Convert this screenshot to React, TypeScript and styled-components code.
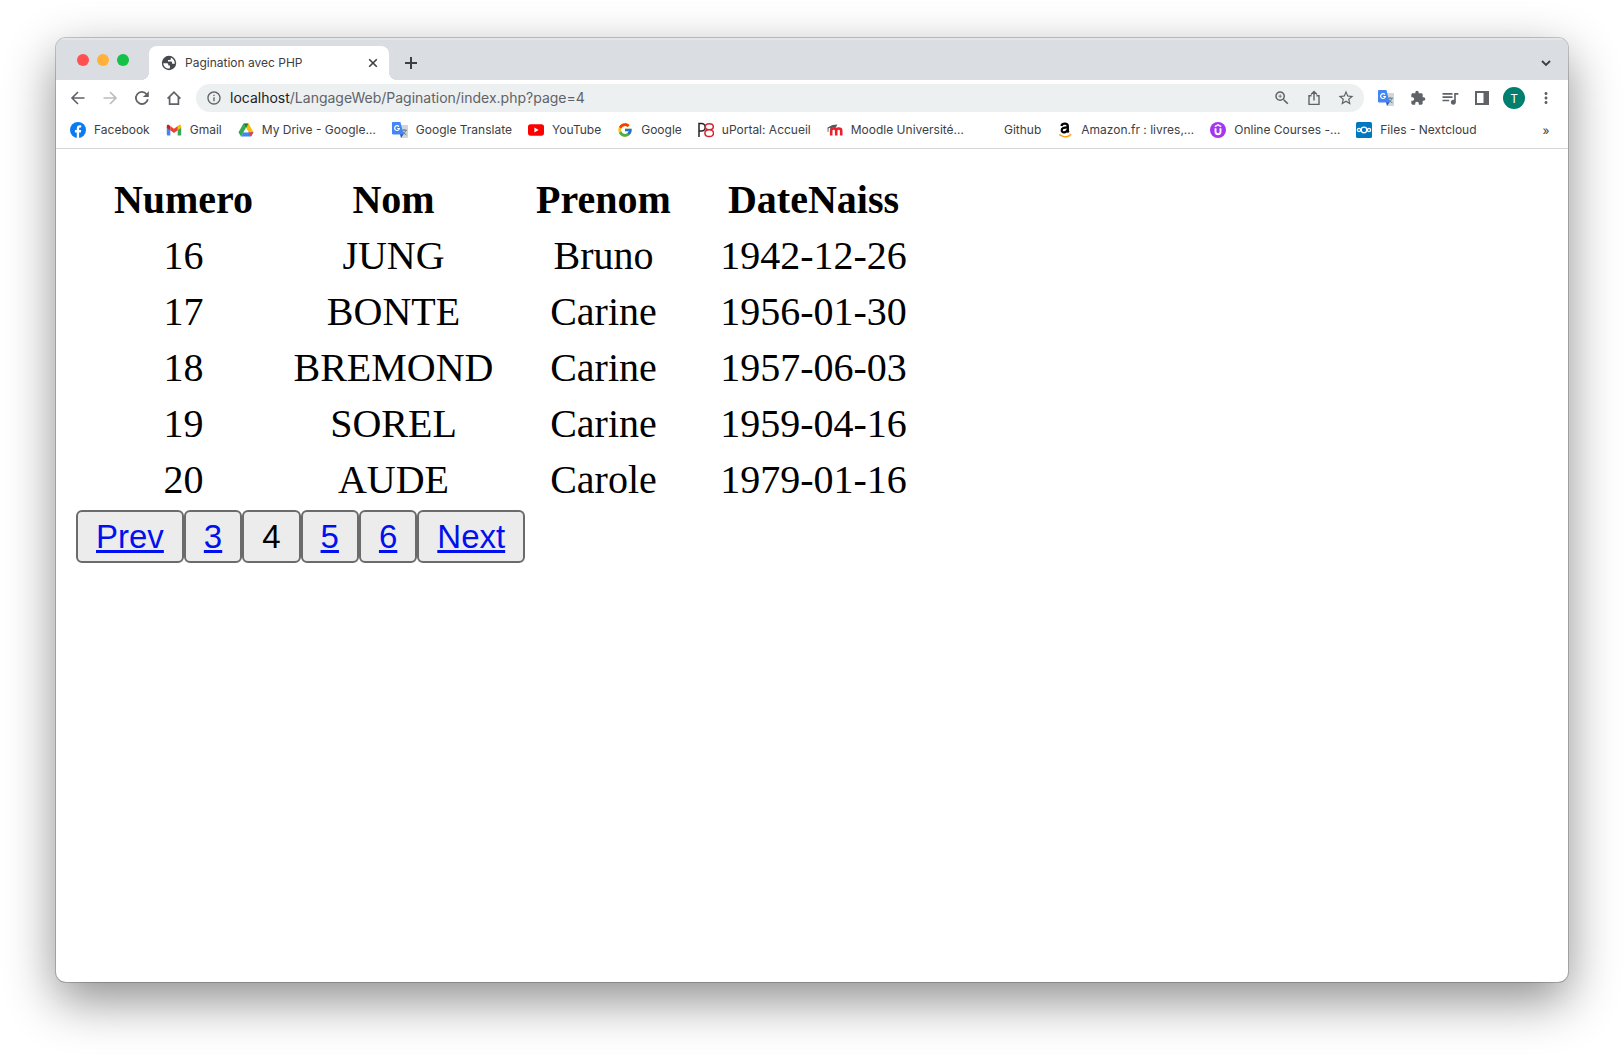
import React from "react";
import styled, { createGlobalStyle } from "styled-components";
import { FcGoogle } from "react-icons/fc";
import {
  MdExtension,
  MdInfoOutline,
  MdMoreVert,
  MdOutlineZoomIn,
  MdQueueMusic,
  MdStarBorder,
} from "react-icons/md";

const uiFont = `Inter, "Noto Sans", sans-serif`;

const GlobalStyle = createGlobalStyle`
  *, *::before, *::after { box-sizing: border-box; }
  body { margin: 0; background: #fff; }
`;

const Desktop = styled.div`
  display: flex;
  min-height: 100vh;
  padding: 38px 56px 74px;
`;

const Window = styled.div`
  flex: 1;
  min-width: 0;
  display: flex;
  flex-direction: column;
  overflow: hidden;
  border-radius: 10px;
  background: #fff;
  box-shadow: 0 0 0 1px rgba(0, 0, 0, 0.2), 0 18px 50px rgba(0, 0, 0, 0.45);
`;

const TabStrip = styled.div`
  display: flex;
  align-items: flex-end;
  height: 42px;
  padding: 0 6px 0 21px;
  background: #dadde2;
  box-shadow: inset 0 2px 0 #e3e5e9;
  font-family: ${uiFont};
`;

const WindowControls = styled.div`
  display: flex;
  gap: 8px;
  padding-bottom: 14px;
  margin-right: 20px;
`;

const Light = styled.button<{ $color: string }>`
  width: 12px;
  height: 12px;
  padding: 0;
  border: 0;
  border-radius: 50%;
  background: ${(p) => p.$color};
`;

const Tab = styled.div`
  position: relative;
  display: flex;
  align-items: center;
  width: 240px;
  height: 34px;
  padding: 0 8px 0 12px;
  border-radius: 8px 8px 0 0;
  background: #fff;
  color: #3c4043;
  &::before,
  &::after {
    content: "";
    position: absolute;
    bottom: 0;
    width: 8px;
    height: 8px;
  }
  &::before {
    right: 100%;
    background: radial-gradient(circle at 0 0, transparent 8px, #fff 8px);
  }
  &::after {
    left: 100%;
    background: radial-gradient(circle at 100% 0, transparent 8px, #fff 8px);
  }
`;

const TabTitle = styled.span`
  flex: 1;
  margin-left: 8px;
  font-size: 12px;
  line-height: 16px;
  white-space: nowrap;
`;

const IconButton = styled.button<{ $size?: number; $color?: string }>`
  display: flex;
  flex: none;
  align-items: center;
  justify-content: center;
  width: ${(p) => p.$size ?? 32}px;
  height: ${(p) => p.$size ?? 32}px;
  padding: 0;
  border: 0;
  background: transparent;
  color: ${(p) => p.$color ?? "#5f6368"};
`;

const StripButtons = styled.div`
  flex: 1;
  display: flex;
  justify-content: space-between;
  height: 34px;
  align-items: center;
  padding-left: 6px;
`;

const Toolbar = styled.div`
  display: flex;
  align-items: center;
  height: 36px;
  padding: 0 6px;
  font-family: ${uiFont};
`;

const AddressBar = styled.label`
  flex: 1;
  min-width: 0;
  display: flex;
  align-items: center;
  height: 28px;
  margin: 0 6px;
  padding: 0 2px 0 10px;
  border-radius: 14px;
  background: #ecf0f1;
  color: #202124;
  font-size: 14px;
  line-height: 20px;
`;

const Host = styled.span`
  margin-left: 8px;
`;

const UrlPath = styled.input`
  flex: 1;
  min-width: 0;
  padding: 0;
  border: 0;
  outline: 0;
  background: transparent;
  color: #5f6368;
  font: inherit;
`;

const Avatar = styled.span`
  display: flex;
  align-items: center;
  justify-content: center;
  width: 22px;
  height: 22px;
  border-radius: 50%;
  background: #007f6e;
  color: #fff;
  font-family: ${uiFont};
  font-size: 12px;
`;

const BookmarkBar = styled.nav`
  display: flex;
  justify-content: space-between;
  height: 33px;
  padding: 0 6px 4px 14px;
  border-bottom: 1px solid #d5d7da;
  font-family: ${uiFont};
`;

const BookmarkList = styled.div`
  display: flex;
  align-items: center;
  gap: 16px;
`;

const Bookmark = styled.a`
  display: flex;
  align-items: center;
  gap: 8px;
  color: #3c4043;
  font-size: 12px;
  line-height: 16px;
  white-space: nowrap;
  text-decoration: none;
  svg {
    flex: none;
  }
`;

const More = styled.button`
  width: 32px;
  padding: 0;
  border: 0;
  background: transparent;
  color: #3c4043;
  font-family: ${uiFont};
  font-size: 12px;
`;

const Page = styled.main`
  flex: 1;
  padding: 20px;
`;

const Table = styled.table`
  border-spacing: 5px;
  table-layout: fixed;
  color: #000;
  font-family: "Liberation Serif", "Times New Roman", serif;
  font-size: 40px;
  line-height: 46px;
  text-align: center;
  th,
  td {
    width: 205px;
    padding: 3px 0 2px;
  }
`;

const Pagination = styled.nav`
  display: flex;
`;

const PageLink = styled.a`
  padding: 6px 18px 5px;
  border: 2px solid #6b6b6b;
  border-radius: 6px;
  background: #ececec;
  color: #0010ee;
  font-family: "Liberation Sans", Arial, sans-serif;
  font-size: 33px;
  line-height: 38px;
  text-decoration: underline 3px;
`;

const CurrentPage = styled(PageLink).attrs({ as: "button" })`
  color: #000;
  text-decoration: none;
`;

const stroke = { fill: "none", stroke: "currentColor", strokeWidth: 1.6 };

const BackIcon = () => (
  <svg width="16" height="16" viewBox="0 0 16 16" {...stroke}>
    <path d="M14.5 8H2.5M8 2 2 8l6 6" />
  </svg>
);
const ForwardIcon = () => (
  <svg width="16" height="16" viewBox="0 0 16 16" {...stroke}>
    <path d="M1.5 8h12M8 2l6 6-6 6" />
  </svg>
);
const ReloadIcon = () => (
  <svg width="16" height="16" viewBox="0 0 16 16" {...stroke}>
    <path d="M13.8 9.2A6 6 0 1 1 12.6 4.2" strokeWidth="1.8" />
    <path d="M14.8 1v6H8.8l2.6-2.2L13 3.2z" fill="currentColor" stroke="none" />
  </svg>
);
const HomeIcon = () => (
  <svg width="16" height="16" viewBox="0 0 16 16" {...stroke}>
    <path d="M1.6 8.6 8 2.2l6.4 6.4M3.6 7v7.2h8.8V7" strokeWidth="1.7" />
  </svg>
);
const CloseIcon = () => (
  <svg width="10" height="10" viewBox="0 0 10 10" {...stroke}>
    <path d="m1.2 1.2 7.6 7.6M8.8 1.2 1.2 8.8" />
  </svg>
);
const PlusIcon = () => (
  <svg width="12" height="12" viewBox="0 0 12 12" {...stroke}>
    <path d="M6 0v12M0 6h12" strokeWidth="2" />
  </svg>
);
const ChevronIcon = () => (
  <svg width="10" height="10" viewBox="0 0 10 10" {...stroke}>
    <path d="m1 3 4 4 4-4" strokeWidth="1.9" />
  </svg>
);
const GlobeIcon = () => (
  <svg width="16" height="16" viewBox="0 0 16 16">
    <circle cx="8" cy="8" r="7.2" fill="#46494d" />
    <path
      d="M2.200 8.200h3.600c1 0 1.500.7 1.500 1.500v.8h1.600v2.800c-.8.300-2 .3-3-.1C3.700 12.300 2.300 10.400 2.200 8.200z"
      fill="#fff"
    />
    <path
      d="M9.800 2.500v1.300c0 .8-.6 1.300-1.400 1.300H7v1.500h2.800c.8 0 1.300.5 1.300 1.300v.8h2.700c.2-2.600-1.500-5.200-4-6.200z"
      fill="#fff"
    />
  </svg>
);
const ShareIcon = () => (
  <svg width="14" height="16" viewBox="0 0 14 16" {...stroke}>
    <path d="M4.500 5.800H2v8.600h10V5.800H9.500M7 10.500V2M4 4.600l3-3 3 3" strokeWidth="1.400" />
  </svg>
);
const PanelIcon = () => (
  <svg width="14" height="14" viewBox="0 0 14 14">
    <path fill="currentColor" d="M0 0h14v14H0zM2 2v10h6.500V2z" fillRule="evenodd" />
  </svg>
);

const TranslateIcon = () => (
  <svg width="16" height="16" viewBox="0 0 16 16">
    <path fill="#d2d5d9" d="M6 3h9.200a.8.8 0 0 1 .8.8v11.400a.8.8 0 0 1-.8.8H9z" />
    <path d="M9.500 8.200h5.500M12 7v1.200M13.800 8.200c-.4 2-1.800 3.600-3.600 4.600M10.600 9c.6 1.600 2 3 3.800 3.800" fill="none" stroke="#5b7f88" strokeWidth="1" />
    <path fill="#2a4fc4" d="M8 12h3.600L9 16z" />
    <path fill="#4285f4" d="M.8 0h7.600L11.600 12.400H.8a.8.8 0 0 1-.8-.8V.8A.8.8 0 0 1 .8 0z" />
    <path d="M7 4.700A2.400 2.400 0 1 0 7.400 6.500H5.200" fill="none" stroke="#fff" strokeWidth="1.200" />
  </svg>
);
const FacebookIcon = () => (
  <svg width="16" height="16" viewBox="0 0 16 16">
    <circle cx="8" cy="8" r="8" fill="#0a7cf2" />
    <path fill="#fff" d="M6.800 16v-5.600H4.900V8h1.900V6.600c0-2.300 1.100-3.400 3.100-3.400.5 0 1 .1 1.300.2v2h-.9c-.9 0-1.200.4-1.200 1.200V8h2.100l-.4 2.400H9.100V16z" />
  </svg>
);
const GmailIcon = () => (
  <svg width="16" height="16" viewBox="0 0 16 16">
    <path fill="#4285f4" d="M.8 5v7.400c0 .6.500 1.100 1.100 1.100h2.400V7.200z" />
    <path fill="#34a853" d="M15.200 5v7.400c0 .6-.5 1.100-1.100 1.100h-2.400V7.200z" />
    <path fill="#c5221f" d="M.8 4.200v1.500l3.500 2.600V4.100l-1-.8C2.200 2.400.8 3 .8 4.200z" />
    <path fill="#fbbc04" d="M15.200 4.200v1.500l-3.500 2.600V4.100l1-.8c1.100-.9 2.500-.3 2.500.9z" />
    <path fill="#ea4335" d="M4.300 8.300V4L8 6.800 11.700 4v4.300L8 11z" />
  </svg>
);
const DriveIcon = () => (
  <svg width="16" height="16" viewBox="0 0 16 16">
    <path fill="#34a853" d="M5.500 1.500 8 6 3 14.500.5 10.200z" />
    <path fill="#fbbc04" d="M5.500 1.500h5l5 8.700h-4.900z" />
    <path fill="#188038" d="M5.500 1.500h5L8 6z" />
    <path fill="#4285f4" d="M5.400 10.200h10.100L13 14.500H3z" />
    <path fill="#ea4335" d="M10.600 10.200h4.900L13 14.500z" />
    <path fill="#fff" d="m8 6 2.500 4.200h-5z" />
  </svg>
);
const YouTubeIcon = () => (
  <svg width="16" height="16" viewBox="0 0 16 16">
    <rect y="2.300" width="16" height="11.400" rx="2.600" fill="#f00" />
    <path fill="#fff" d="m6.400 5.600 4.200 2.400-4.200 2.400z" />
  </svg>
);
const GoogleIcon = () => <FcGoogle size={16} />;
const PortalIcon = () => (
  <svg width="16" height="16" viewBox="0 0 16 16" fill="none" strokeWidth="1.500">
    <path stroke="#222" d="M1 15V1.500h2.500a3 3 0 0 1 0 7.500H1" />
    <path stroke="#d5232f" d="M11.300 7.800c-2.500 0-4-1.200-4-3s1.400-3 4-3 4 1.200 4 3-1.500 3-4 3zm0 0c-2.900 0-4.400 1.400-4.400 3.400s1.500 3.300 4.400 3.300 4.200-1.300 4.200-3.300-1.300-3.400-4.200-3.400z" />
  </svg>
);
const MoodleIcon = () => (
  <svg width="16" height="16" viewBox="0 0 16 16">
    <path d="M4.200 13.500V8.400c0-2.600 5-2.600 5 0v5.100m0-5.100c0-2.600 5-2.600 5 0v5.100" fill="none" stroke="#e8212b" strokeWidth="2.600" />
    <path fill="#58595b" d="m.5 5.600 5-2.600 5-.4-2.200 3.600c-2-.7-3.600-.3-4.700 1L3 5.800l-1.400.4L1.400 10H.7z" />
  </svg>
);
const BlankIcon = () => <svg width="16" height="16" viewBox="0 0 16 16" />;
const AmazonIcon = () => (
  <svg width="16" height="16" viewBox="0 0 16 16" aria-hidden="true">
    <g fill="none" stroke="#000">
      <path d="M4.500 3.900c.3-1.500 1.600-2.200 3.300-2.200 2 0 3 .8 3 2.600v4.200c0 .8.300 1.300.8 1.900" strokeWidth="2.300" />
      <path d="M10.500 5.400c-3.600-.1-5.800.7-5.800 2.900 0 2.800 4.500 2.700 5.800-.5" strokeWidth="2.200" />
    </g>
    <path d="M2.200 12.600c3.500 2.600 7.600 2.700 10.600.8" fill="none" stroke="#f90" strokeWidth="1.300" />
    <path d="m11.800 12.200 2.200-.1-.4 2.200" fill="none" stroke="#f90" strokeWidth=".8" />
  </svg>
);
const UdemyIcon = () => (
  <svg width="16" height="16" viewBox="0 0 16 16">
    <circle cx="8" cy="8" r="8" fill="#a435f0" />
    <path d="M5.500 6.300v3.500c0 3.200 5 3.200 5 0V6.300" fill="none" stroke="#fff" strokeWidth="1.900" />
    <path d="M4.800 4.700 8 2.900l3.200 1.800" fill="none" stroke="#fff" strokeWidth="1.500" />
  </svg>
);
const NextcloudIcon = () => (
  <svg width="16" height="16" viewBox="0 0 16 16">
    <rect width="16" height="16" rx="1.500" fill="#0078c1" />
    <g fill="none" stroke="#fff" strokeWidth="1.300">
      <circle cx="8" cy="8" r="2.800" />
      <circle cx="3" cy="8" r="1.600" />
      <circle cx="13" cy="8" r="1.600" />
    </g>
  </svg>
);

const bookmarks = [
  { label: "Facebook", Icon: FacebookIcon },
  { label: "Gmail", Icon: GmailIcon },
  { label: "My Drive - Google…", Icon: DriveIcon },
  { label: "Google Translate", Icon: TranslateIcon },
  { label: "YouTube", Icon: YouTubeIcon },
  { label: "Google", Icon: GoogleIcon },
  { label: "uPortal: Accueil", Icon: PortalIcon },
  { label: "Moodle Université…", Icon: MoodleIcon },
  { label: "Github", Icon: BlankIcon },
  { label: "Amazon.fr : livres,…", Icon: AmazonIcon },
  { label: "Online Courses -…", Icon: UdemyIcon },
  { label: "Files - Nextcloud", Icon: NextcloudIcon },
];

const columns = ["Numero", "Nom", "Prenom", "DateNaiss"];
const rows = [
  ["16", "JUNG", "Bruno", "1942-12-26"],
  ["17", "BONTE", "Carine", "1956-01-30"],
  ["18", "BREMOND", "Carine", "1957-06-03"],
  ["19", "SOREL", "Carine", "1959-04-16"],
  ["20", "AUDE", "Carole", "1979-01-16"],
];
const pages = [
  { label: "Prev", page: 3 },
  { label: "3", page: 3 },
  { label: "4", page: 4 },
  { label: "5", page: 5 },
  { label: "6", page: 6 },
  { label: "Next", page: 5 },
];
const currentPage = 4;

export default function App() {
  return (
    <Desktop>
      <GlobalStyle />
      <Window>
        <TabStrip>
          <WindowControls>
            <Light $color="#ff5150" aria-label="Close window" />
            <Light $color="#ffb13b" aria-label="Minimize window" />
            <Light $color="#12c146" aria-label="Zoom window" />
          </WindowControls>
          <Tab>
            <GlobeIcon />
            <TabTitle>Pagination avec PHP</TabTitle>
            <IconButton $size={16} $color="#3c4043" aria-label="Close tab">
              <CloseIcon />
            </IconButton>
          </Tab>
          <StripButtons>
            <IconButton $color="#3c4043" aria-label="New tab">
              <PlusIcon />
            </IconButton>
            <IconButton $color="#3c4043" aria-label="Search tabs">
              <ChevronIcon />
            </IconButton>
          </StripButtons>
        </TabStrip>
        <Toolbar>
          <IconButton aria-label="Back"><BackIcon /></IconButton>
          <IconButton $color="#babcbe" aria-label="Forward"><ForwardIcon /></IconButton>
          <IconButton aria-label="Reload"><ReloadIcon /></IconButton>
          <IconButton aria-label="Home"><HomeIcon /></IconButton>
          <AddressBar>
            <MdInfoOutline size={16} color="#5f6368" />
            <Host>localhost</Host>
            <UrlPath defaultValue="/LangageWeb/Pagination/index.php?page=4" aria-label="Address" />
            <IconButton aria-label="Zoom"><MdOutlineZoomIn size={18} /></IconButton>
            <IconButton aria-label="Share"><ShareIcon /></IconButton>
            <IconButton aria-label="Bookmark this page"><MdStarBorder size={18} /></IconButton>
          </AddressBar>
          <IconButton aria-label="Translate"><TranslateIcon /></IconButton>
          <IconButton aria-label="Extensions"><MdExtension size={16} /></IconButton>
          <IconButton aria-label="Media"><MdQueueMusic size={20} /></IconButton>
          <IconButton aria-label="Side panel"><PanelIcon /></IconButton>
          <IconButton aria-label="Profile"><Avatar>T</Avatar></IconButton>
          <IconButton aria-label="Menu"><MdMoreVert size={18} /></IconButton>
        </Toolbar>
        <BookmarkBar aria-label="Bookmarks">
          <BookmarkList>
            {bookmarks.map(({ label, Icon }) => (
              <Bookmark key={label} href="#">
                <Icon />
                {label}
              </Bookmark>
            ))}
          </BookmarkList>
          <More aria-label="More bookmarks">»</More>
        </BookmarkBar>
        <Page>
          <Table>
            <thead>
              <tr>
                {columns.map((name) => (
                  <th key={name} scope="col">{name}</th>
                ))}
              </tr>
            </thead>
            <tbody>
              {rows.map((row) => (
                <tr key={row[0]}>
                  {row.map((cell) => (
                    <td key={cell}>{cell}</td>
                  ))}
                </tr>
              ))}
            </tbody>
          </Table>
          <Pagination aria-label="Pagination">
            {pages.map(({ label, page }) =>
              page === currentPage ? (
                <CurrentPage key={label}>{label}</CurrentPage>
              ) : (
                <PageLink key={label} href={`#page=${page}`}>{label}</PageLink>
              )
            )}
          </Pagination>
        </Page>
      </Window>
    </Desktop>
  );
}
